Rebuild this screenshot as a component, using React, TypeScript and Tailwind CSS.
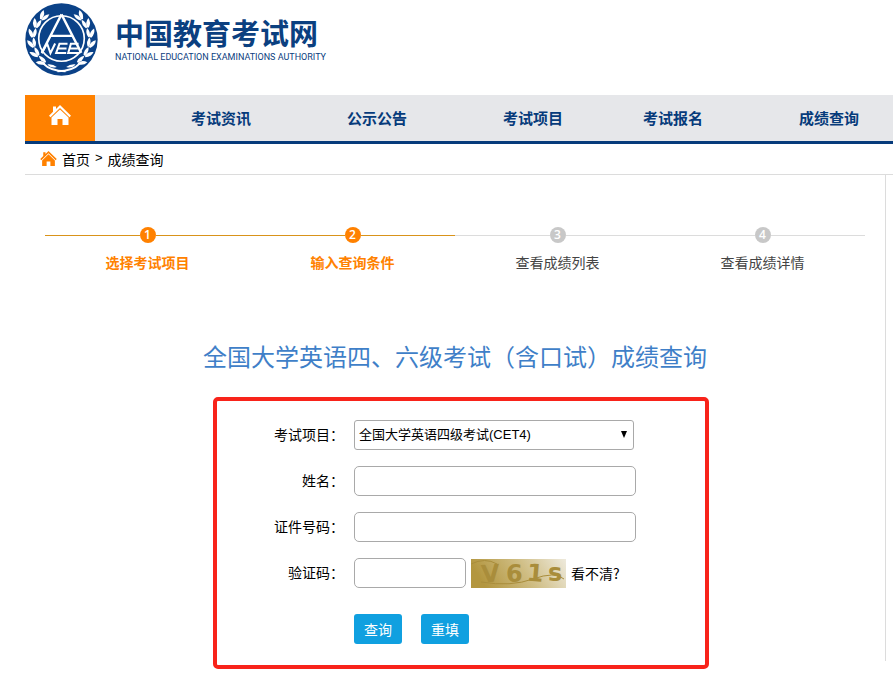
import type { ReactNode } from 'react';

const navItems = [
  { label: '考试资讯', spacing: 'ml-24' },
  { label: '公示公告', spacing: 'ml-24' },
  { label: '考试项目', spacing: 'ml-24' },
  { label: '考试报名', spacing: 'ml-20' },
  { label: '成绩查询', spacing: 'ml-24' },
];

const steps = [
  { label: '选择考试项目', active: true },
  { label: '输入查询条件', active: true },
  { label: '查看成绩列表', active: false },
  { label: '查看成绩详情', active: false },
];

const leafAngles = [-52, -32, -12, 8, 28, 48];

const Emblem = () => (
  <svg viewBox="0 0 218 218" className="w-[73px] h-[73px] shrink-0" aria-hidden="true">
    <circle cx="109" cy="109" r="108" fill="#0b4288" />
    {[1, -1].map((side) => (
      <g key={side} transform={`translate(109 109) scale(${side} 1)`} fill="#fff">
        {leafAngles.map((angle) => (
          <g key={angle} transform={`rotate(${angle})`}>
            <path d="M80 10 Q73 -4 82 -18 Q91 -4 84 10 Z" />
            <path d="M84 10 Q86 -6 102 -12 Q103 4 88 13 Z" />
          </g>
        ))}
        <path d="M54 72 Q34 94 -12 95" fill="none" stroke="#fff" strokeWidth="6" />
        <path d="M14 82 Q26 72 42 74 Q32 88 14 82 Z" />
      </g>
    ))}
    <circle cx="109" cy="106" r="68" fill="#0b4288" stroke="#fff" strokeWidth="5" />
    <path d="M109 34 L50 149 M109 34 L168 149 M77 98 H141" fill="none" stroke="#fff" strokeWidth="7" />
    <path d="M50 150 L66 121 L76 150 L90 121 M127 122 H103 L93 149 H123 M98 136 H124 M160 122 H137 L129 149 H163 M133 136 H158" fill="none" stroke="#fff" strokeWidth="6" />
  </svg>
);

const HomeIcon = ({ className }: { className: string }) => (
  <svg viewBox="0 0 22 20" fill="currentColor" className={className} aria-hidden="true">
    <path d="M11 0 L22 10.8 L20.5 12.3 L11 3 L1.5 12.3 L0 10.8 L4 6.8 V1.5 H7 V4 Z" />
    <path d="M11 4.4 L19.5 12.5 V20 H13.5 V14 H8.5 V20 H2.5 V12.5 Z" />
  </svg>
);

const Captcha = () => (
  <svg viewBox="0 0 95 29" className="w-[95px] h-[29px]" role="img" aria-label="验证码">
    <defs>
      <linearGradient id="captcha" x1="0" y1="0.2" x2="1" y2="0">
        <stop offset="0" stopColor="#b3963f" />
        <stop offset="0.5" stopColor="#cfbd83" />
        <stop offset="1" stopColor="#eeeadd" />
      </linearGradient>
    </defs>
    <rect width="95" height="29" fill="url(#captcha)" />
    <path d="M0 5 Q14 -2 26 5 M10 23 Q40 28 62 20 T93 20" fill="none" stroke="#a98d3b" />
    <g fill="#a98d3b" fontFamily="DejaVu Sans" fontWeight="bold" fontSize="24">
      <text x="10" y="23" transform="rotate(-4 18 14)">V</text>
      <text x="35" y="23">6</text>
      <text x="56" y="22" transform="rotate(5 62 14)">1</text>
      <text x="77" y="22">s</text>
    </g>
  </svg>
);

const Row = ({ label, htmlFor, children }: { label: string; htmlFor: string; children: ReactNode }) => (
  <div className="flex items-center h-[30px] mb-4">
    <label htmlFor={htmlFor} className="w-[127px] mr-[10px] pb-[2px] text-right">{label}</label>
    {children}
  </div>
);

const inputClass = 'h-[30px] border border-[#a9a9a9] rounded-[5px] bg-white px-2';

const App = () => {
  return (
    <div className="pl-[25px] pb-6 bg-white text-sm text-black font-['Noto_Sans_CJK_SC',sans-serif] overflow-x-hidden">
      <header className="flex h-[95px] pt-[3px]">
        <Emblem />
        <div className="ml-[17px] pt-[11px] text-[#0b4080]">
          <h1 className="text-[29px] leading-9 font-bold whitespace-nowrap">中国教育考试网</h1>
          <p className="text-[9px] leading-[14px] whitespace-nowrap font-['Roboto',sans-serif]">
            NATIONAL EDUCATION EXAMINATIONS AUTHORITY
          </p>
        </div>
      </header>

      <nav className="flex h-[49px] bg-[#e6e7ea] border-b-3 border-[#063b7b]">
        <a href="#" aria-label="首页" className="w-[70px] shrink-0 flex justify-center pt-[10px] bg-[#ff8100] text-white">
          <HomeIcon className="w-[22px] h-5" />
        </a>
        {navItems.map((item) => (
          <a
            key={item.label}
            href="#"
            className={`${item.spacing} shrink-0 leading-[46px] text-[15px] font-bold text-[#063b7b]`}
          >
            {item.label}
          </a>
        ))}
      </nav>

      <div className="flex items-center h-[31px] pl-[15px] pb-px border-b border-[#dcdcdc]">
        <HomeIcon className="w-[17px] h-[15px] mr-[5px] text-[#ff8100]" />
        <a href="#">首页</a>
        <span className="mx-[5px] text-[13px] font-['Liberation_Sans',sans-serif]">&gt;</span>
        <a href="#">成绩查询</a>
      </div>

      <main className="mr-[7px] h-[486px] border-r border-[#dcdcdc] px-5 pt-[52px]">
        <ol className="grid grid-cols-4">
          {steps.map((step, index) => (
            <li key={step.label} className="text-center">
              <div className="flex items-center h-4">
                <span className={step.active ? 'flex-1 h-px bg-[#d9931a]' : 'flex-1 h-px bg-[#dcdcdc]'} />
                <span
                  className={`w-4 h-4 rounded-full text-xs leading-4 font-semibold text-white font-['Open_Sans',sans-serif] ${
                    step.active ? 'bg-[#ff8100]' : 'bg-[#c8c8c8]'
                  }`}
                >
                  {index + 1}
                </span>
                <span className={step.active ? 'flex-1 h-px bg-[#d9931a]' : 'flex-1 h-px bg-[#dcdcdc]'} />
              </div>
              <p className={`mt-[9px] leading-5 ${step.active ? 'font-bold text-[#ff8100]' : 'text-[#444]'}`}>
                {step.label}
              </p>
            </li>
          ))}
        </ol>

        <h2 className="mt-[66px] text-2xl leading-9 text-center text-[#3f7fc8]">
          全国大学英语四、六级考试（含口试）成绩查询
        </h2>

        <div className="flex justify-center pl-3 mt-[23px]">
          <form
            className="w-[496px] pt-[19px] pb-[21px] border-4 border-[#f8231a] rounded-[5px]"
            onSubmit={(e) => e.preventDefault()}
          >
            <Row label="考试项目：" htmlFor="exam">
              <div className="relative">
                <select
                  id="exam"
                  className="appearance-none w-[280px] h-[30px] border border-[#a9a9a9] rounded-[3px] bg-white pl-1 pr-5 text-[13px] font-['Liberation_Sans','Noto_Sans_CJK_SC',sans-serif]"
                >
                  <option>全国大学英语四级考试(CET4)</option>
                </select>
                <svg viewBox="0 0 6 7" className="absolute right-[7px] top-[11px] w-[6px] h-[7px] pointer-events-none">
                  <path d="M0 0 H6 L3 7 Z" />
                </svg>
              </div>
            </Row>
            <Row label="姓名：" htmlFor="name">
              <input id="name" type="text" className={`${inputClass} w-[282px]`} />
            </Row>
            <Row label="证件号码：" htmlFor="idno">
              <input id="idno" type="text" className={`${inputClass} w-[282px]`} />
            </Row>
            <Row label="验证码：" htmlFor="code">
              <input id="code" type="text" className={`${inputClass} w-[112px] mr-[5px]`} />
              <Captcha />
              <a href="#" className="ml-[5px]">看不清?</a>
            </Row>
            <div className="flex gap-[19px] pl-[137px] pt-[10px]">
              <button type="submit" className="w-12 h-[30px] rounded-[3px] bg-[#10a0e0] text-white">查询</button>
              <button type="reset" className="w-12 h-[30px] rounded-[3px] bg-[#10a0e0] text-white">重填</button>
            </div>
          </form>
        </div>
      </main>
    </div>
  );
};

export default App;
